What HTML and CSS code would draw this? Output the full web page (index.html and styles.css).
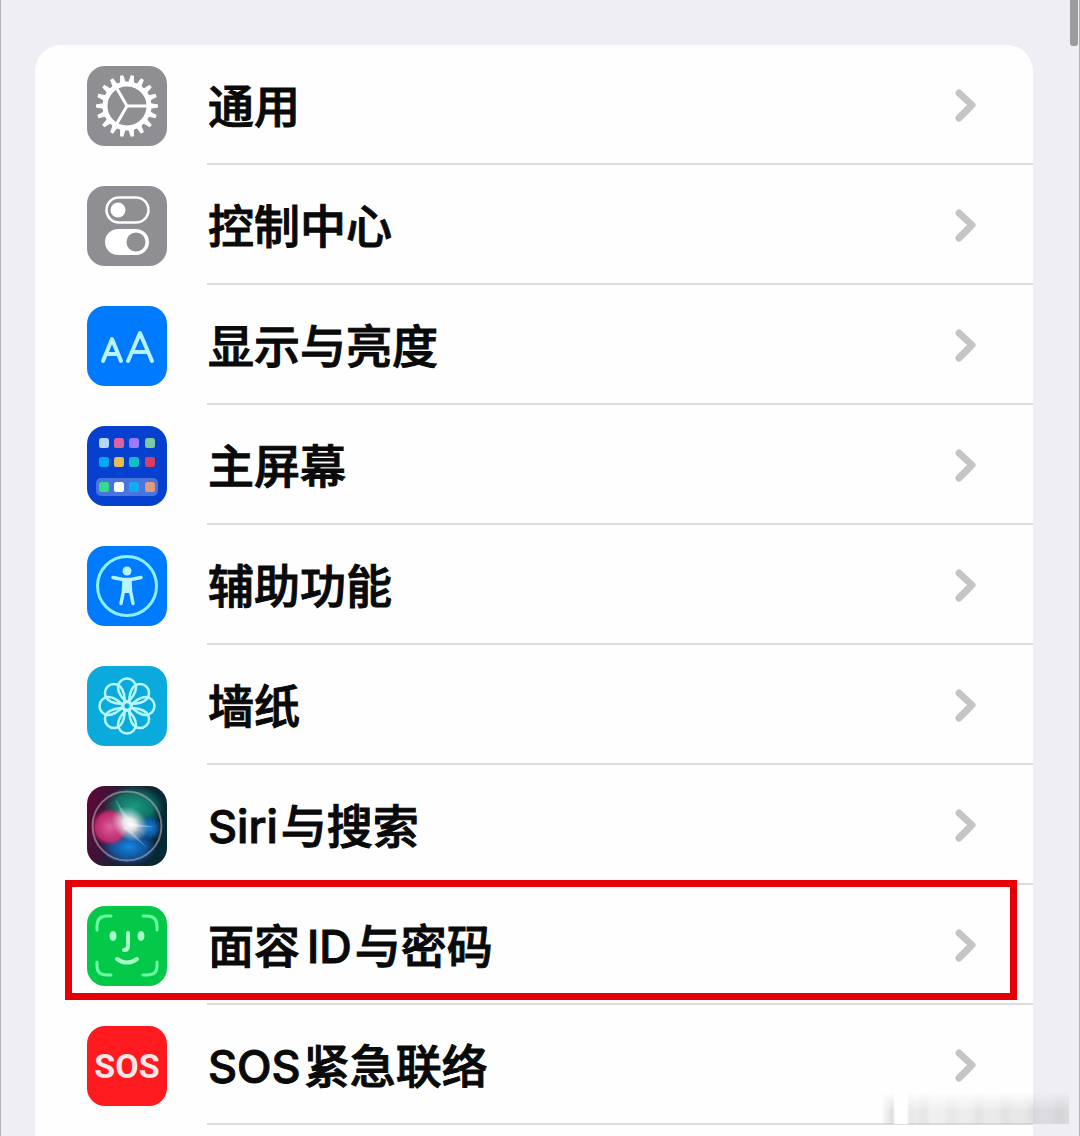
FILE: index.html
```
<!DOCTYPE html>
<html lang="zh-CN">
<head>
<meta charset="utf-8">
<meta name="viewport" content="width=device-width, initial-scale=1">
<title>设置</title>
<link rel="stylesheet" href="styles.css">
</head>
<body>
<svg class="defs" width="0" height="0" aria-hidden="true">
  <symbol id="chevron" viewBox="0 0 24 36"><path d="M4 5 17 17 4 30" fill="none" stroke="#c4c4c6" stroke-width="7" stroke-linecap="round" stroke-linejoin="round"/></symbol>
</svg>
<main class="screen">
  <nav class="card" aria-label="设置">
    <a class="row" href="#general">
      <svg class="icon gray" viewBox="0 0 80 80" aria-hidden="true">
        <g fill="none" stroke="#fff">
          <circle cx="40" cy="40" r="22" stroke-width="5"/>
          <path id="tooth" d="M62 37.500 70.500 38.800V41.200L62 42.500Z" fill="#fff" stroke-width="1"/>
          <use href="#tooth" transform="rotate(20 40 40)"/>
          <use href="#tooth" transform="rotate(40 40 40)"/>
          <use href="#tooth" transform="rotate(60 40 40)"/>
          <use href="#tooth" transform="rotate(80 40 40)"/>
          <use href="#tooth" transform="rotate(100 40 40)"/>
          <use href="#tooth" transform="rotate(120 40 40)"/>
          <use href="#tooth" transform="rotate(140 40 40)"/>
          <use href="#tooth" transform="rotate(160 40 40)"/>
          <use href="#tooth" transform="rotate(180 40 40)"/>
          <use href="#tooth" transform="rotate(200 40 40)"/>
          <use href="#tooth" transform="rotate(220 40 40)"/>
          <use href="#tooth" transform="rotate(240 40 40)"/>
          <use href="#tooth" transform="rotate(260 40 40)"/>
          <use href="#tooth" transform="rotate(280 40 40)"/>
          <use href="#tooth" transform="rotate(300 40 40)"/>
          <use href="#tooth" transform="rotate(320 40 40)"/>
          <use href="#tooth" transform="rotate(340 40 40)"/>
          <path d="M40 40H62M40 40 29 21M40 40 29 59" stroke-width="3"/>
        </g>
      </svg>
      <span class="label">通用</span>
      <svg class="chevron" aria-hidden="true"><use href="#chevron"/></svg>
    </a>
    <a class="row" href="#control-center">
      <svg class="icon gray" viewBox="0 0 80 80" aria-hidden="true">
        <rect x="19.5" y="11.5" width="42" height="25" rx="12.5" fill="none" stroke="#fff" stroke-width="2.5"/>
        <circle cx="31" cy="24" r="7.5" fill="#fff"/>
        <rect x="18" y="43" width="44" height="26" rx="13" fill="#fff"/>
        <circle cx="49" cy="56" r="9.5" fill="#8e8e93"/>
      </svg>
      <span class="label">控制中心</span>
      <svg class="chevron" aria-hidden="true"><use href="#chevron"/></svg>
    </a>
    <a class="row" href="#display">
      <svg class="icon blue" viewBox="0 0 80 80" aria-hidden="true">
        <path d="M16 55 25 33 34 55M19 48H31M41 55 53 27 65 55M45 46H61" fill="none" stroke="#b5f4ff" stroke-width="4" stroke-linecap="round" stroke-linejoin="round"/>
      </svg>
      <span class="label">显示与亮度</span>
      <svg class="chevron" aria-hidden="true"><use href="#chevron"/></svg>
    </a>
    <a class="row" href="#home-screen">
      <svg class="icon navy" viewBox="0 0 80 80" aria-hidden="true">
        <rect x="9" y="52" width="62" height="18" rx="5" fill="#4a74dd"/>
        <rect x="12" y="12" width="10" height="10" rx="2.500" fill="#b5d5ff"/>
        <rect x="27" y="12" width="10" height="10" rx="2.500" fill="#dc62a0"/>
        <rect x="42" y="12" width="10" height="10" rx="2.500" fill="#9a7bff"/>
        <rect x="58" y="12" width="10" height="10" rx="2.500" fill="#7bcb9c"/>
        <rect x="12" y="31" width="10" height="10" rx="2.500" fill="#00a9f5"/>
        <rect x="27" y="31" width="10" height="10" rx="2.500" fill="#e7bd50"/>
        <rect x="42" y="31" width="10" height="10" rx="2.500" fill="#10bdc9"/>
        <rect x="58" y="31" width="10" height="10" rx="2.500" fill="#d9405f"/>
        <rect x="12" y="56" width="10" height="10" rx="2.500" fill="#35d990"/>
        <rect x="27" y="56" width="10" height="10" rx="2.500" fill="#fff"/>
        <rect x="42" y="56" width="10" height="10" rx="2.500" fill="#10adf5"/>
        <rect x="58" y="56" width="10" height="10" rx="2.500" fill="#e19a7d"/>
      </svg>
      <span class="label">主屏幕</span>
      <svg class="chevron" aria-hidden="true"><use href="#chevron"/></svg>
    </a>
    <a class="row" href="#accessibility">
      <svg class="icon blue" viewBox="0 0 80 80" aria-hidden="true">
        <circle cx="40" cy="40" r="29.500" fill="none" stroke="#8df0ff" stroke-width="3"/>
        <circle cx="40" cy="25" r="4.500" fill="#b5f4ff"/>
        <path d="M26 31.500 36 33.500H44L54 31.500M37 35 36.500 45 34 57.500M43 35 43.500 45 46 57.500" fill="none" stroke="#b5f4ff" stroke-width="3.500" stroke-linecap="round" stroke-linejoin="round"/>
        <path d="M36 33H44L44.500 47H35.500Z" fill="#b5f4ff"/>
      </svg>
      <span class="label">辅助功能</span>
      <svg class="chevron" aria-hidden="true"><use href="#chevron"/></svg>
    </a>
    <a class="row" href="#wallpaper">
      <svg class="icon cyan" viewBox="0 0 80 80" aria-hidden="true">
        <defs><path id="petal" d="M40 36C35 33 31 26 31 21.500A9 9 0 0 1 49 21.500C49 26 45 33 40 36Z"/></defs>
        <g fill="none" stroke="#b9f7ff" stroke-width="2.500">
          <use href="#petal"/>
          <use href="#petal" transform="rotate(45 40 40)"/>
          <use href="#petal" transform="rotate(90 40 40)"/>
          <use href="#petal" transform="rotate(135 40 40)"/>
          <use href="#petal" transform="rotate(180 40 40)"/>
          <use href="#petal" transform="rotate(225 40 40)"/>
          <use href="#petal" transform="rotate(270 40 40)"/>
          <use href="#petal" transform="rotate(315 40 40)"/>
          <circle cx="40" cy="40" r="4"/>
        </g>
      </svg>
      <span class="label">墙纸</span>
      <svg class="chevron" aria-hidden="true"><use href="#chevron"/></svg>
    </a>
    <a class="row" href="#siri">
      <svg class="icon" viewBox="0 0 80 80" aria-hidden="true">
        <defs>
          <linearGradient id="siri-base" x1="0" y1=".3" x2="1" y2=".5"><stop offset="0" stop-color="#5c0836"/><stop offset=".45" stop-color="#1c2038"/><stop offset="1" stop-color="#042a33"/></linearGradient>
          <radialGradient id="siri-pink"><stop offset="0" stop-color="#e0609f"/><stop offset=".75" stop-color="#d22c72" stop-opacity=".85"/><stop offset="1" stop-color="#b01c5c" stop-opacity="0"/></radialGradient>
          <radialGradient id="siri-green"><stop offset="0" stop-color="#1b9c80"/><stop offset=".6" stop-color="#0f8570" stop-opacity=".8"/><stop offset="1" stop-color="#067060" stop-opacity="0"/></radialGradient>
          <radialGradient id="siri-blue"><stop offset="0" stop-color="#1687e6"/><stop offset=".6" stop-color="#1068c0" stop-opacity=".7"/><stop offset="1" stop-color="#0b4da8" stop-opacity="0"/></radialGradient>
          <radialGradient id="siri-glow"><stop offset="0" stop-color="#fff"/><stop offset=".35" stop-color="#fff" stop-opacity=".85"/><stop offset="1" stop-color="#d8f4ff" stop-opacity="0"/></radialGradient>
        </defs>
        <rect width="80" height="80" fill="url(#siri-base)"/>
        <ellipse cx="47" cy="21" rx="31" ry="22" fill="url(#siri-green)"/>
        <ellipse cx="42" cy="61" rx="29" ry="19" fill="url(#siri-blue)"/>
        <circle cx="23" cy="41" r="19" fill="url(#siri-pink)"/>
        <circle cx="62" cy="42" r="13" fill="url(#siri-blue)"/>
        <ellipse cx="43" cy="38" rx="20" ry="16" fill="url(#siri-glow)" transform="rotate(40 43 38)"/>
        <path d="M38 36 28 13 43 34ZM43 37 68 41 44 41ZM40 40 60 62 36 42Z" fill="#fff" fill-opacity=".3"/>
        <circle cx="40" cy="40" r="34.500" fill="none" stroke="#c0a5b8" stroke-opacity=".6" stroke-width="2"/>
      </svg>
      <span class="label"><span class="latin">Siri</span>与搜索</span>
      <svg class="chevron" aria-hidden="true"><use href="#chevron"/></svg>
    </a>
    <a class="row marked" href="#face-id">
      <svg class="icon green" viewBox="0 0 80 80" aria-hidden="true">
        <g fill="none" stroke="#6effa5" stroke-width="3" stroke-linecap="round">
          <path d="M10 24V20Q10 10 20 10H24M56 10H60Q70 10 70 20V24M70 56V60Q70 69 60 69H56M24 69H20Q10 69 10 60V56"/>
          <path d="M41 27V40Q41 44 37 44M30 53Q40 60 50 53" stroke="#a8ffc8" stroke-width="4"/>
        </g>
        <ellipse cx="26" cy="30" rx="3.500" ry="5" fill="#a8ffc8"/><ellipse cx="54" cy="30" rx="3.500" ry="5" fill="#a8ffc8"/>
      </svg>
      <span class="label">面容<span class="latin inner">ID</span>与密码</span>
      <svg class="chevron" aria-hidden="true"><use href="#chevron"/></svg>
    </a>
    <a class="row" href="#sos">
      <span class="icon red" aria-hidden="true">SOS</span>
      <span class="label"><span class="latin">SOS</span>紧急联络</span>
      <svg class="chevron" aria-hidden="true"><use href="#chevron"/></svg>
    </a>
  </nav>
  <div class="thumb"></div>
  <div class="smear"></div>
</main>
</body>
</html>
```
FILE: styles.css
```
* { box-sizing: border-box; }

body {
  margin: 0;
  background: #efeef4;
  color: #0a0a0a;
  font-family: Inter, "Noto Sans CJK SC", sans-serif;
}

.defs { position: absolute; }

.screen {
  position: relative;
  display: flex;
  flex-direction: column;
  min-height: 100vh;
  padding: 45px 46px 0 34px;
  border: solid #b2b2b6;
  border-width: 0 1px;
}

.card {
  flex: 1;
  background: #fefefe;
  border-radius: 26px 26px 0 0;
}

.row {
  position: relative;
  display: flex;
  align-items: center;
  gap: 41px;
  height: 120px;
  padding: 2px 54px 0 52px;
  color: inherit;
  text-decoration: none;
}

.row::after {
  content: "";
  position: absolute;
  left: 172px;
  right: 0;
  bottom: 0;
  height: 2px;
  background: #dcdcde;
}

.icon {
  flex: none;
  width: 80px;
  height: 80px;
  border-radius: 18px;
}

.gray { background: #8e8e93; }
.blue { background: #007aff; }
.navy { background: #0640cf; }
.cyan { background: #0aabdc; }
.green { background: #04c848; }

.red {
  display: flex;
  align-items: center;
  justify-content: center;
  background: #ff1a1f;
  color: #ffe6e6;
  font: 700 34px "Liberation Sans Narrow", Roboto, sans-serif;
}

.label {
  flex: 1;
  font-size: 46px;
  font-weight: 500;
  line-height: 60px;
  white-space: nowrap;
  -webkit-text-stroke: 1px #0a0a0a;
}

.latin {
  margin-right: 3px;
  font-size: 45px;
}

.inner { margin-left: 7px; }

.chevron {
  flex: none;
  width: 24px;
  height: 36px;
}

.marked::before {
  content: "";
  position: absolute;
  z-index: 1;
  inset: -5px 16px 5px 30px;
  border: 7px solid #e60005;
}

.thumb {
  position: absolute;
  top: 0;
  right: 1px;
  width: 8px;
  height: 46px;
  border-radius: 0 0 3px 3px;
  background: #9c9c9f;
}

.smear {
  position: absolute;
  right: 10px;
  bottom: 12px;
  width: 188px;
  height: 32px;
  background:
    linear-gradient(90deg, transparent 12px, #fff 14px 26px, transparent 28px),
    repeating-linear-gradient(90deg, transparent 0 9px, #8881 14px 18px, transparent 24px 27px),
    linear-gradient(90deg, transparent, #bbb6 10px, #ccc4 50px, #bbb6);
  mask-image: linear-gradient(transparent, #000 60%);
}
```
